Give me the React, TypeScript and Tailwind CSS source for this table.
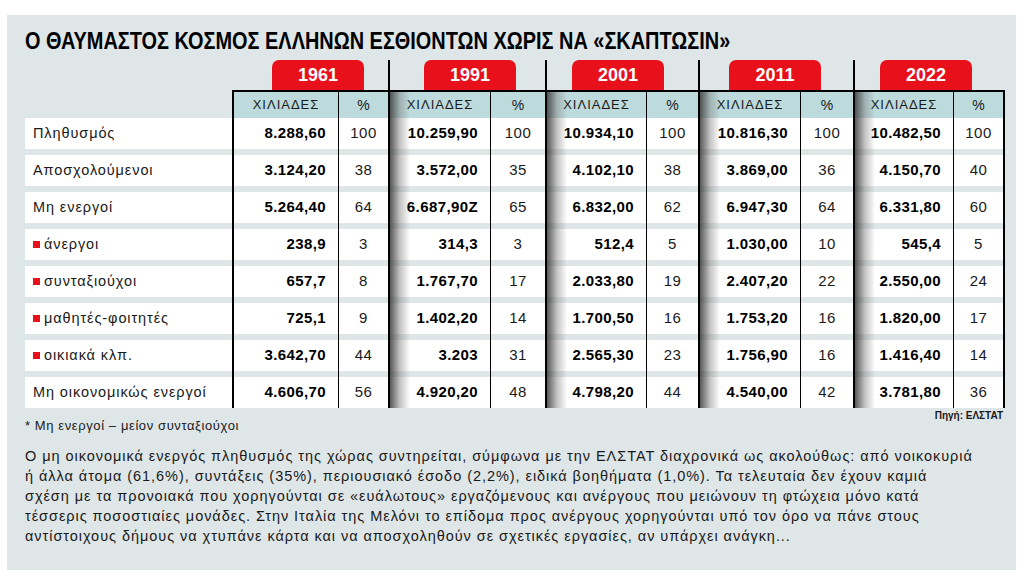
import React from "react";

const cols =
  "grid grid-cols-[207px_106px_50px_102px_55px_101px_52px_102px_53px_100px_52px]";

const font = "font-['Liberation_Sans',Arial,sans-serif]";

const years = [
  { y: "1961", tab: "ml-[40px]", line: "" },
  { y: "1991", tab: "ml-[34px]", line: "border-l-2 border-black" },
  { y: "2001", tab: "ml-[25px]", line: "border-l-2 border-black" },
  { y: "2011", tab: "ml-[29px]", line: "border-l-2 border-black" },
  { y: "2022", tab: "ml-[25px]", line: "border-l-2 border-black" },
];

type Row = { label: string; sub?: boolean; vals: [string, string][] };

const rows: Row[] = [
  {
    label: "Πληθυσμός",
    vals: [["8.288,60", "100"], ["10.259,90", "100"], ["10.934,10", "100"], ["10.816,30", "100"], ["10.482,50", "100"]],
  },
  {
    label: "Αποσχολούμενοι",
    vals: [["3.124,20", "38"], ["3.572,00", "35"], ["4.102,10", "38"], ["3.869,00", "36"], ["4.150,70", "40"]],
  },
  {
    label: "Μη ενεργοί",
    vals: [["5.264,40", "64"], ["6.687,90Z", "65"], ["6.832,00", "62"], ["6.947,30", "64"], ["6.331,80", "60"]],
  },
  {
    label: "άνεργοι",
    sub: true,
    vals: [["238,9", "3"], ["314,3", "3"], ["512,4", "5"], ["1.030,00", "10"], ["545,4", "5"]],
  },
  {
    label: "συνταξιούχοι",
    sub: true,
    vals: [["657,7", "8"], ["1.767,70", "17"], ["2.033,80", "19"], ["2.407,20", "22"], ["2.550,00", "24"]],
  },
  {
    label: "μαθητές-φοιτητές",
    sub: true,
    vals: [["725,1", "9"], ["1.402,20", "14"], ["1.700,50", "16"], ["1.753,20", "16"], ["1.820,00", "17"]],
  },
  {
    label: "οικιακά κλπ.",
    sub: true,
    vals: [["3.642,70", "44"], ["3.203", "31"], ["2.565,30", "23"], ["1.756,90", "16"], ["1.416,40", "14"]],
  },
  {
    label: "Μη οικονομικώς ενεργοί",
    vals: [["4.606,70", "56"], ["4.920,20", "48"], ["4.798,20", "44"], ["4.540,00", "42"], ["3.781,80", "36"]],
  },
];

const lines = [
  "Ο μη οικονομικά ενεργός πληθυσμός της χώρας συντηρείται, σύμφωνα με την ΕΛΣΤΑΤ διαχρονικά ως ακολούθως: από νοικοκυριά",
  "ή άλλα άτομα (61,6%), συντάξεις (35%), περιουσιακό έσοδο (2,2%), ειδικά βοηθήματα (1,0%). Τα τελευταία δεν έχουν καμιά",
  "σχέση με τα προνοιακά που χορηγούνται σε «ευάλωτους» εργαζόμενους και ανέργους που μειώνουν τη φτώχεια μόνο κατά",
  "τέσσερις ποσοστιαίες μονάδες. Στην Ιταλία της Μελόνι το επίδομα προς ανέργους χορηγούνται υπό τον όρο να πάνε στους",
  "αντίστοιχους δήμους να χτυπάνε κάρτα και να αποσχοληθούν σε σχετικές εργασίες, αν υπάρχει ανάγκη...",
];

// shadow strip at the left of groups 2-5
const Shade = () => (
  <div className="pointer-events-none absolute inset-y-0 left-0 w-[20px] bg-linear-to-r from-[#3c3c3c]/85 via-[#7c7c7c]/45 to-transparent" />
);

const App = () => {
  return (
    <div className={`min-h-[585px] w-[1024px] bg-white pt-[15px] pl-[7px] ${font}`}>
      <div className="h-[555px] w-[1009px] bg-[#dfe6e8] pl-[18px]">
        {/* title */}
        <div className="h-[45px] pt-[12px]">
          <h1 className="origin-left scale-x-[0.83] whitespace-nowrap text-[24px] font-bold leading-[28px] text-black">
            Ο ΘΑΥΜΑΣΤΟΣ ΚΟΣΜΟΣ ΕΛΛΗΝΩΝ ΕΣΘΙΟΝΤΩΝ ΧΩΡΙΣ ΝΑ «ΣΚΑΠΤΩΣΙΝ»
          </h1>
        </div>

        {/* year tabs */}
        <div className={cols}>
          <div />
          {years.map((yr) => (
            <div key={yr.y} className={`col-span-2 h-[30px] ${yr.line}`}>
              <div
                className={`flex h-[30px] w-[92px] items-center justify-center rounded-t-[7px] bg-[#e8101a] text-[18px] font-bold text-white ${yr.tab}`}
              >
                {yr.y}
              </div>
            </div>
          ))}
        </div>

        {/* header row */}
        <div className={cols}>
          <div />
          {years.map((yr, i) => (
            <React.Fragment key={yr.y}>
              <div className="relative flex h-[28px] items-center justify-center border-t-2 border-l-2 border-black bg-[#bddadc] text-[13px] tracking-[1px] text-[#1a1a1a]">
                {i > 0 && <Shade />}
                ΧΙΛΙΑΔΕΣ
              </div>
              <div
                className={`flex h-[28px] items-center justify-center border-t-2 border-l border-black bg-[#bddadc] text-[14px] text-[#1a1a1a] ${
                  i === 4 ? "border-r-2" : ""
                }`}
              >
                %
              </div>
            </React.Fragment>
          ))}
        </div>

        {/* data rows */}
        {rows.map((r, ri) => (
          <div key={r.label} className={cols}>
            <div className={ri === rows.length - 1 ? "h-[31px]" : "h-[37px]"}>
              <div className="flex h-[31px] items-center gap-[4px] bg-white pl-[8px] text-[14.5px] tracking-[0.9px] text-[#1a1a1a]">
                {r.sub && <span className="inline-block h-[7px] w-[7px] bg-[#e8101a]" />}
                {r.label}
              </div>
            </div>
            {r.vals.map(([v, p], i) => (
              <React.Fragment key={i}>
                <div
                  className={`relative border-l-2 border-black ${ri === rows.length - 1 ? "h-[31px]" : "h-[37px]"}`}
                >
                  <div className="flex h-[31px] items-center justify-end bg-white pr-[12px] text-[15px] font-bold tracking-[0.4px] text-black">
                    {v}
                  </div>
                  {i > 0 && <Shade />}
                </div>
                <div
                  className={`border-l border-black ${i === 4 ? "border-r-2" : ""} ${
                    ri === rows.length - 1 ? "h-[31px]" : "h-[37px]"
                  }`}
                >
                  <div className="flex h-[31px] items-center justify-center bg-white text-[15px] tracking-[0.5px] text-[#1a1a1a]">
                    {p}
                  </div>
                </div>
              </React.Fragment>
            ))}
          </div>
        ))}

        {/* notes */}
        <div className="flex w-[980px] items-start justify-between">
          <p className="pt-[8px] text-[13px] tracking-[0.6px] text-[#1a1a1a]">* Μη ενεργοί – μείον συνταξιούχοι</p>
          <p className="pr-[2px] text-[10px] font-bold text-[#1a1a1a]">Πηγή: ΕΛΣΤΑΤ</p>
        </div>

        <div className="pt-[10px] text-[14.5px] leading-[20px] tracking-[0.95px] text-[#1a1a1a]">
          {lines.map((l) => (
            <p key={l} className="whitespace-nowrap">
              {l}
            </p>
          ))}
        </div>
      </div>
    </div>
  );
};

export default App;
